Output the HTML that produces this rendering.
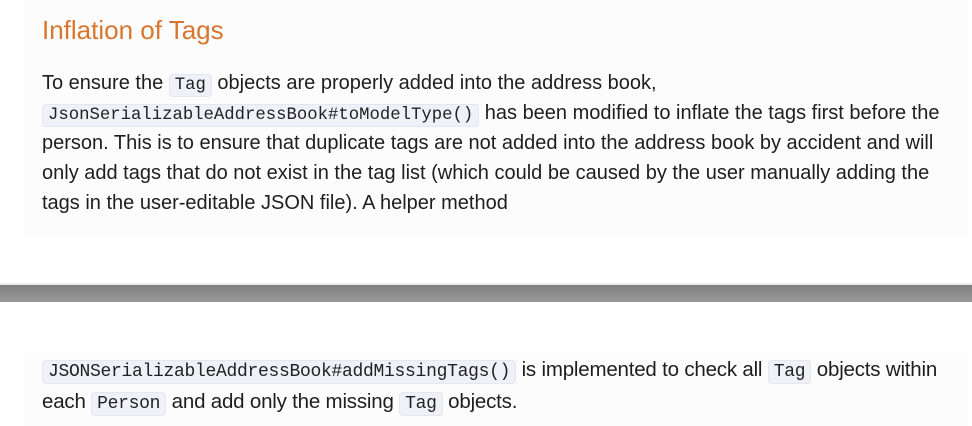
<!DOCTYPE html>
<html><head><meta charset="utf-8"><style>
html,body{margin:0;padding:0;background:#fff;width:972px;height:426px;overflow:hidden;position:relative;font-family:"Liberation Sans",sans-serif;color:#1e1e1e}
.panel{position:absolute;left:23px;right:4px;background:#fcfcfc}
.l{position:absolute;left:42px;white-space:nowrap;font-size:20px;line-height:24px}
code{font-family:"Liberation Mono",monospace;font-size:17.3px;background:#f0f0f8;border:1px solid #e6e6ee;border-radius:4px;padding:1px 5px;color:#222}
.b{font-size:20.5px;letter-spacing:-0.2px}
.b code{font-size:18px;letter-spacing:-0.3px}
h2{position:absolute;left:42px;top:15px;margin:0;font-weight:normal;font-size:26px;color:#d9762e}
</style></head><body>
<div class="panel" style="top:0;height:236px"></div>
<h2>Inflation of Tags</h2>
<div class="l" style="top:71px">To ensure the <code>Tag</code> objects are properly added into the address book,</div>
<div class="l" style="top:101px"><code>JsonSerializableAddressBook#toModelType()</code> has been modified to inflate the tags first before the</div>
<div class="l" style="top:131px">person. This is to ensure that duplicate tags are not added into the address book by accident and will</div>
<div class="l" style="top:161px">only add tags that do not exist in the tag list (which could be caused by the user manually adding the</div>
<div class="l" style="top:191px">tags in the user-editable JSON file). A helper method</div>
<div style="position:absolute;left:0;right:0;top:283px;height:2px;background:#eee"></div>
<div style="position:absolute;left:0;right:0;top:285px;height:17px;background:linear-gradient(#7f7f7f,#999)"></div>
<div class="panel" style="top:353px;height:80px"></div>
<div class="l b" style="top:358px"><code>JSONSerializableAddressBook#addMissingTags()</code> is implemented to check all <code>Tag</code> objects within</div>
<div class="l b" style="top:390px">each <code>Person</code> and add only the missing <code>Tag</code> objects.</div>
</body></html>
